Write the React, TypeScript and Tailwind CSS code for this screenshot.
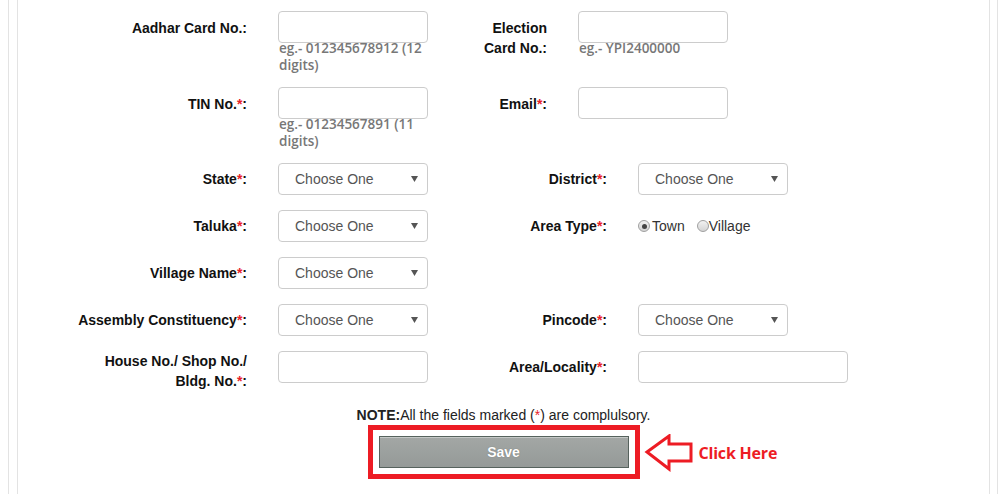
import React from "react";

const Star = () => <span className="text-[#e8202a]">*</span>;

const Label = ({ children, className = "" }: { children: React.ReactNode; className?: string }) => (
  <div className={`text-right font-bold text-[14px] leading-[20px] text-[#111] shrink-0 ${className}`}>
    {children}
  </div>
);

const TextBox = ({ w = "w-[150px]" }: { w?: string }) => (
  <div className={`${w} h-[32px] shrink-0 rounded-[4px] border border-[#cccccc] bg-white`} />
);

const Hint = ({ children }: { children: React.ReactNode }) => (
  <div className="pl-[1px] mt-[-3px] font-['Open_Sans',sans-serif] font-semibold text-[13.5px] leading-[17px] text-[#777] whitespace-nowrap">
    {children}
  </div>
);

const Select = () => (
  <div className="w-[150px] h-[32px] shrink-0 rounded-[4px] border border-[#cccccc] bg-white flex items-center pl-[16px] pr-[8px] text-[14px] text-[#555]">
    <span className="flex-1">Choose One</span>
    <svg width="7" height="6" viewBox="0 0 7 6" className="mr-[1px]">
      <path d="M0 0h7L3.5 6z" fill="#555" />
    </svg>
  </div>
);

const Radio = ({ checked }: { checked?: boolean }) => (
  <span className="inline-flex w-[12px] h-[12px] rounded-full border border-[#a0a0a0] bg-gradient-to-b from-[#f2f2f2] to-[#d4d4d4] items-center justify-center">
    {checked && <span className="w-[5px] h-[5px] rounded-full bg-[#444]" />}
  </span>
);

export default function App() {
  return (
    <div className="w-[1008px] h-[494px] bg-white pl-[8px] pr-[10px] font-['Liberation_Sans',Arial,sans-serif] text-[#222] overflow-hidden">
      <div className="h-full border-l border-r border-[#e3e3e3]">
        <div className="h-full ml-[8px] mr-[7px] border-l border-r border-[#e3e3e3] bg-white pt-[11px]">
          {/* Aadhar / Election */}
          <div className="flex items-start h-[76px]">
            <Label className="w-[229px] pt-[7px]">Aadhar Card No.:</Label>
            <div className="ml-[31px] w-[150px]">
              <TextBox />
              <Hint>
                eg.- 012345678912 (12
                <br />
                digits)
              </Hint>
            </div>
            <Label className="w-[119px] pt-[7px]">
              Election
              <br />
              Card No.:
            </Label>
            <div className="ml-[31px] w-[150px]">
              <TextBox />
              <Hint>eg.- YPI2400000</Hint>
            </div>
          </div>

          {/* TIN / Email */}
          <div className="flex items-start h-[76px]">
            <Label className="w-[229px] pt-[7px]">
              TIN No.<Star />:
            </Label>
            <div className="ml-[31px] w-[150px]">
              <TextBox />
              <Hint>
                eg.- 01234567891 (11
                <br />
                digits)
              </Hint>
            </div>
            <Label className="w-[119px] pt-[7px]">
              Email<Star />:
            </Label>
            <div className="ml-[31px]">
              <TextBox />
            </div>
          </div>

          <div className="flex flex-col gap-[15px]">
            {/* State / District */}
            <div className="flex items-center h-[32px]">
              <Label className="w-[229px]">
                State<Star />:
              </Label>
              <div className="ml-[31px]">
                <Select />
              </div>
              <Label className="w-[179px]">
                District<Star />:
              </Label>
              <div className="ml-[31px]">
                <Select />
              </div>
            </div>

            {/* Taluka / Area Type */}
            <div className="flex items-center h-[32px]">
              <Label className="w-[229px]">
                Taluka<Star />:
              </Label>
              <div className="ml-[31px]">
                <Select />
              </div>
              <Label className="w-[179px]">
                Area Type<Star />:
              </Label>
              <div className="ml-[31px] flex items-center text-[14px] text-[#333]">
                <Radio checked />
                <span className="ml-[2px]">Town</span>
                <span className="ml-[12px] flex items-center">
                  <Radio />
                  <span>Village</span>
                </span>
              </div>
            </div>

            {/* Village Name */}
            <div className="flex items-center h-[32px]">
              <Label className="w-[229px]">
                Village Name<Star />:
              </Label>
              <div className="ml-[31px]">
                <Select />
              </div>
            </div>

            {/* Assembly / Pincode */}
            <div className="flex items-center h-[32px]">
              <Label className="w-[229px]">
                Assembly Constituency<Star />:
              </Label>
              <div className="ml-[31px]">
                <Select />
              </div>
              <Label className="w-[179px]">
                Pincode<Star />:
              </Label>
              <div className="ml-[31px]">
                <Select />
              </div>
            </div>

            {/* House / Area Locality */}
            <div className="flex items-center h-[32px]">
              <Label className="w-[229px] mt-[8px]">
                House No./ Shop No./
                <br />
                Bldg. No.<Star />:
              </Label>
              <div className="ml-[31px]">
                <TextBox />
              </div>
              <Label className="w-[179px]">
                Area/Locality<Star />:
              </Label>
              <div className="ml-[31px]">
                <TextBox w="w-[210px]" />
              </div>
            </div>
          </div>

          {/* Note + Save */}
          <div className="mt-[22px] flex flex-col items-center">
            <p className="text-[14px] leading-[20px] text-[#222]">
              <span className="font-bold">NOTE:</span>All the fields marked (<Star />) are complulsory.
            </p>
            <div className="relative">
              <div className="w-[272px] h-[54px] border-[5px] border-[#ed1c24] p-[6px]">
                <button className="w-[250px] h-[32px] border border-[#56625d] bg-gradient-to-b from-[#a3a7a5] to-[#959a98] shadow-[inset_0_1px_0_#c4c8c6] text-white font-bold text-[14px] [text-shadow:0_0_1px_#6a6f6d]">
                  Save
                </button>
              </div>
              <div className="absolute left-[276px] top-[9px] flex items-center whitespace-nowrap">
                <svg width="50" height="38" viewBox="0 0 50 38" className="shrink-0">
                  <polygon
                    points="3,18 25,2 25,10 47,10 47,27 25,27 25,35"
                    fill="none"
                    stroke="#ed1c24"
                    strokeWidth="3"
                    strokeLinejoin="miter"
                  />
                </svg>
                <span className="ml-[5px] font-['Open_Sans',sans-serif] font-bold text-[16px] text-[#ed1c24] tracking-[-0.2px]">
                  Click Here
                </span>
              </div>
            </div>
          </div>
        </div>
      </div>
    </div>
  );
}
